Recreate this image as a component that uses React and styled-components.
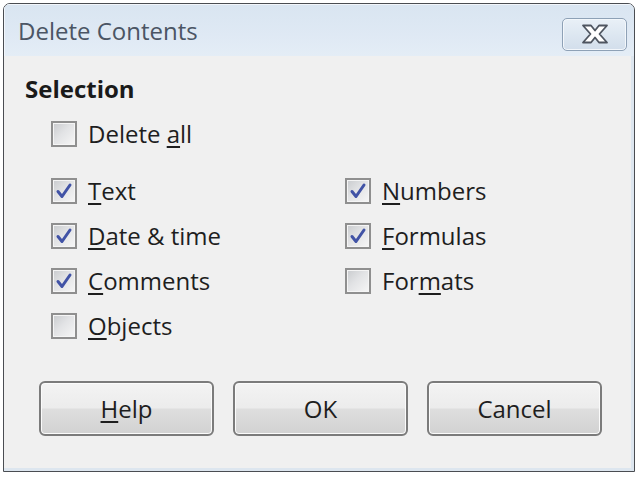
import React from "react";
import styled, { createGlobalStyle } from "styled-components";

const Global = createGlobalStyle`
  html, body { margin: 0; padding: 0; background: #ffffff; }
  body { font-family: "Open Sans", "Noto Sans", sans-serif; }
`;

const Window = styled.div`
  margin: 3px 0 0 3px;
  width: 632px;
  height: 469px;
  box-sizing: border-box;
  border: 1px solid #4a4d52;
  border-radius: 7px 7px 0 0;
  display: flex;
  flex-direction: column;
  overflow: hidden;
  background: #f0f0f0;
`;

const TitleBar = styled.div`
  height: 52px;
  flex: none;
  display: flex;
  align-items: center;
  justify-content: space-between;
  padding: 0 7px 0 14px;
  background: linear-gradient(to bottom, #d9e5f1 0%, #dfe9f4 60%, #e4edf6 100%);
  box-shadow: inset 1px 1px 0 #f2f6fb;
`;

const Title = styled.span`
  font-size: 24px;
  color: #4b5564;
`;

const CloseButton = styled.div`
  width: 65px;
  height: 33px;
  margin-top: 8px;
  box-sizing: border-box;
  border: 1px solid #8ea1b6;
  border-radius: 5px;
  background: linear-gradient(to bottom, #e9f0f7 0%, #dde7f1 50%, #d2deeb 100%);
  box-shadow: inset 0 0 0 1px #f3f7fb;
  display: flex;
  align-items: center;
  justify-content: center;
`;

const Body = styled.div`
  flex: 1;
  padding: 18px 0 0 21px;
  background: #f0f0f0;
  border-right: 3px solid #dde6ef;
  border-bottom: 3px solid #dde6ef;
`;

const Heading = styled.div`
  font-weight: 700;
  font-size: 24px;
  line-height: 30px;
  color: #1a1a1a;
`;

const Options = styled.div`
  margin-left: 26px;
`;

const Single = styled.div`
  margin-top: 7px;
  margin-bottom: 12px;
`;

const Grid = styled.div`
  display: grid;
  grid-template-columns: 294px auto;
  grid-auto-rows: 45px;
`;

const Row = styled.label`
  display: flex;
  align-items: center;
  height: 45px;
  gap: 11px;
  font-size: 24px;
  color: #1e1e1e;
`;

const Box = styled.span`
  width: 26px;
  height: 26px;
  box-sizing: border-box;
  flex: none;
  border: 2px solid #8f8f8f;
  box-shadow: inset 0 0 0 1px #f5f5f5;
  background: linear-gradient(135deg, #c9cbce 0%, #e2e3e5 45%, #f6f6f6 100%);
  display: flex;
  align-items: center;
  justify-content: center;
`;

const U = styled.span`
  text-decoration: underline;
  text-decoration-thickness: 2px;
  text-underline-offset: 3px;
`;

const ButtonRow = styled.div`
  display: flex;
  gap: 19px;
  margin: 33px 0 0 14px;
`;

const Button = styled.div`
  width: 175px;
  height: 55px;
  box-sizing: border-box;
  border: 2px solid #7b7b7b;
  border-radius: 6px;
  background: linear-gradient(to bottom, #f3f3f3 0%, #ececec 48%, #dedede 52%, #d2d2d2 100%);
  box-shadow: inset 0 0 0 1px #fbfbfb;
  display: flex;
  align-items: center;
  justify-content: center;
  font-size: 24px;
  color: #1e1e1e;
`;

const Check = () => (
  <svg width="20" height="20" viewBox="0 0 20 20">
    <path d="M4 10.5 L8 15.5 L16 4" fill="none" stroke="#4153a6" strokeWidth="3" strokeLinejoin="round" strokeLinecap="round" />
  </svg>
);

const CloseX = () => (
  <svg width="30" height="20" viewBox="0 0 30 20">
    <path
      d="M3 1.5 H11 L15 6.5 L19 1.5 H27 L19.5 10 L27 18.5 H19 L15 13.5 L11 18.5 H3 L10.5 10 Z"
      fill="#ffffff"
      stroke="#4e5560"
      strokeWidth="1.8"
      strokeLinejoin="round"
    />
  </svg>
);

const Option = ({ checked, children }) => (
  <Row>
    <Box>{checked && <Check />}</Box>
    <span>{children}</span>
  </Row>
);

export default function App() {
  return (
    <>
      <Global />
      <Window>
        <TitleBar>
          <Title>Delete Contents</Title>
          <CloseButton>
            <CloseX />
          </CloseButton>
        </TitleBar>
        <Body>
          <Heading>Selection</Heading>
          <Options>
            <Single>
              <Option>
                Delete <U>a</U>ll
              </Option>
            </Single>
            <Grid>
              <Option checked>
                <U>T</U>ext
              </Option>
              <Option checked>
                <U>N</U>umbers
              </Option>
              <Option checked>
                <U>D</U>ate &amp; time
              </Option>
              <Option checked>
                <U>F</U>ormulas
              </Option>
              <Option checked>
                <U>C</U>omments
              </Option>
              <Option>
                For<U>m</U>ats
              </Option>
              <Option>
                <U>O</U>bjects
              </Option>
            </Grid>
          </Options>
          <ButtonRow>
            <Button>
              <span>
                <U>H</U>elp
              </span>
            </Button>
            <Button>OK</Button>
            <Button>Cancel</Button>
          </ButtonRow>
        </Body>
      </Window>
    </>
  );
}
